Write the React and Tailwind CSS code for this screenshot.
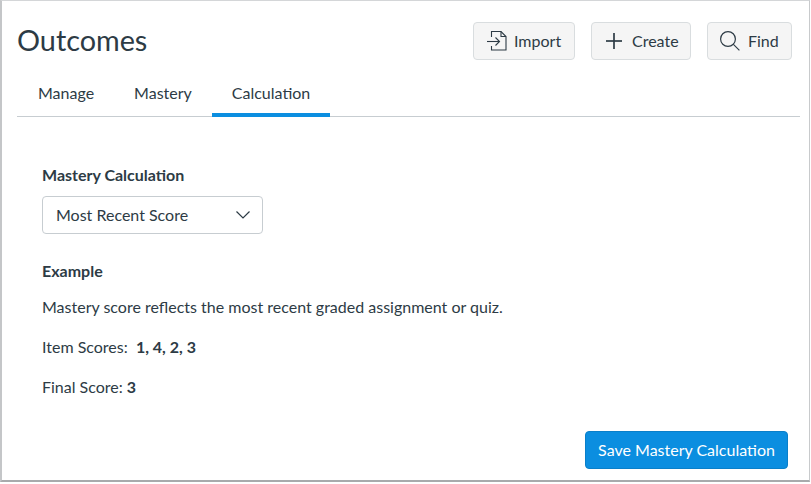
function ImportIcon() {
    return (
        <svg width="22" height="22" viewBox="0 0 22 22" fill="none" stroke="#2d3b45" strokeWidth="1.1">
            <path d="M5.5 7V1.5H15L20 6.5V20H5.5V16" />
            <path d="M15 1.5V6.5H20" />
            <path d="M1 11.5H13" />
            <path d="M9.5 7.5L13.5 11.5L9.5 15.5" />
        </svg>
    );
}

function PlusIcon() {
    return (
        <svg width="16" height="16" viewBox="0 0 16 16" fill="none" stroke="#2d3b45" strokeWidth="1.7">
            <path d="M8 0V16" />
            <path d="M0 8H16" />
        </svg>
    );
}

function FindIcon() {
    return (
        <svg width="20" height="20" viewBox="0 0 20 20" fill="none" stroke="#2d3b45" strokeWidth="1.2">
            <circle cx="8" cy="8" r="7.4" />
            <path d="M13.4 13.4L19.4 19.4" />
        </svg>
    );
}

function ChevronIcon() {
    return (
        <svg width="14" height="8" viewBox="0 0 14 8" fill="none" stroke="#2d3b45" strokeWidth="1.2">
            <path d="M0.5 0.5L7 7L13.5 0.5" />
        </svg>
    );
}

function ToolButton({ icon, label, className }) {
    return (
        <button className={`flex items-center h-[38px] rounded border border-[#d9dddf] bg-[#f5f5f5] text-[16px] text-[#2d3b45] ${className}`}>
            {icon}
            {label}
        </button>
    );
}

function Tab({ label, active }) {
    return (
        <div className={`h-[37px] px-5 flex items-start pt-[1px] border-b-[4px] ${active ? 'border-[#0b8ee0]' : 'border-transparent'}`}>
            {label}
        </div>
    );
}

export default function App() {
    return (
        <div className="w-[811px] h-[484px] bg-white font-['Lato',sans-serif] text-[#2d3b45] overflow-hidden">
            <div className="w-[810px] h-[482px] border-t border-l-2 border-r border-b-2 border-t-[#d4d6d8] border-l-[#c4c6c8] border-r-[#c8cacc] border-b-[#a8aaac] flex flex-col">
                <div className="flex items-start justify-between pt-[21px] pl-[15px] pr-[17px]">
                    <h1 className="text-[28.8px] leading-[37px] font-normal">Outcomes</h1>
                    <div className="flex gap-4">
                        <ToolButton className="w-[102px] pl-[12px] gap-[6px]" icon={<ImportIcon />} label="Import" />
                        <ToolButton className="w-[100px] pl-[14px] gap-[10px]" icon={<PlusIcon />} label="Create" />
                        <ToolButton className="w-[85px] pl-[12px] gap-[8px]" icon={<FindIcon />} label="Find" />
                    </div>
                </div>
                <div className="ml-[15px] mr-[9px] mt-[20px] border-b border-[#c7cdd1] flex text-[16px] h-[37px] pl-px">
                    <Tab label="Manage" />
                    <Tab label="Mastery" />
                    <Tab label="Calculation" active />
                </div>
                <div className="flex-1 flex flex-col pl-[40px] pr-[21px] pt-[48px] text-[16px] leading-[20px]">
                    <div className="font-bold">Mastery Calculation</div>
                    <div className="mt-[11px] w-[221px] h-[38px] rounded border border-[#c7cdd1] flex items-center justify-between pl-[13px] pr-[12px]">
                        Most Recent Score
                        <ChevronIcon />
                    </div>
                    <div className="mt-[27px] font-bold">Example</div>
                    <p className="mt-[16px]">Mastery score reflects the most recent graded assignment or quiz.</p>
                    <p className="mt-[20px]">Item Scores:&nbsp; <b>1, 4, 2, 3</b></p>
                    <p className="mt-[20px]">Final Score: <b>3</b></p>
                    <div className="flex justify-end mt-[34px]">
                        <button className="w-[203px] h-[38px] rounded bg-[#0b8ee0] border border-[#0a7fc9] text-white text-[16px]">Save Mastery Calculation</button>
                    </div>
                </div>
            </div>
        </div>
    );
}
